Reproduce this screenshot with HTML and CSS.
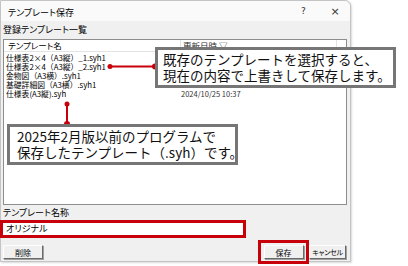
FILE: index.html
```html
<!DOCTYPE html>
<html lang="ja">
<head>
    <meta charset="UTF-8">
    <title>テンプレート保存</title>
    <link rel="stylesheet" href="styles.css">
</head>
<body>
    <div class="page">
        <div class="dialog">
            <div class="titlebar">
                <span class="title">テンプレート保存</span>
                <span class="help">?</span>
                <span class="close">×</span>
            </div>
            <div class="content">
                <div class="label">登録テンプレート一覧</div>
                <div class="list">
                    <div class="list-head">
                        <div class="col-name">テンプレート名</div>
                        <div class="col-date">更新日時 ▽</div>
                        <div class="col-rest"></div>
                    </div>
                    <ul class="rows">
                        <li><span class="name">仕様表2×4（A3縦）_1.syh1</span></li>
                        <li><span class="name">仕様表2×4（A3縦）_2.syh1</span></li>
                        <li><span class="name">金物図（A3横）.syh1</span></li>
                        <li><span class="name">基礎詳細図（A3横）.syh1</span></li>
                        <li><span class="name">仕様表(A3縦).syh</span><span class="date">2024/10/25 10:37</span></li>
                    </ul>
                </div>
                <div class="label label-name">テンプレート名称</div>
                <div class="name-field">オリジナル</div>
                <div class="actions">
                    <button class="btn btn-delete">削除</button>
                    <div class="spacer"></div>
                    <div class="mark"><button class="btn btn-save">保存</button></div>
                    <button class="btn btn-cancel">キャンセル</button>
                </div>
            </div>
        </div>

        <!-- 注釈の引き出し線 -->
        <svg class="pointers" width="408" height="266" viewBox="0 0 408 266">
            <line x1="110" y1="66.5" x2="155" y2="66.5" stroke="#c8000a" stroke-width="2"/>
            <circle cx="110" cy="66.5" r="2.5" fill="#c8000a"/>
            <circle cx="155" cy="66.5" r="3" fill="#c8000a"/>
            <line x1="67" y1="104" x2="67" y2="124" stroke="#c8000a" stroke-width="2"/>
            <circle cx="67" cy="104" r="2.5" fill="#c8000a"/>
            <circle cx="67" cy="124" r="3" fill="#c8000a"/>
        </svg>

        <div class="callout callout-top">既存のテンプレートを選択すると、<br>現在の内容で上書きして保存します。</div>
        <div class="callout callout-bottom">2025年2月版以前のプログラムで<br>保存したテンプレート（.syh）です。</div>
    </div>
</body>
</html>
```

FILE: styles.css
```css
body {
    margin: 0;
    background-color: #fff;
    font-family: 'Noto Sans CJK JP', 'Noto Sans', sans-serif;
    font-feature-settings: "palt";
    color: #000;
}
.page {
    position: relative;
    width: 408px;
    height: 266px;
    overflow: hidden;
}
.dialog {
    width: 351px;
    height: 262px;
    box-sizing: border-box;
    border: 1px solid #c4c4c4;
    border-top-right-radius: 6px;
    background-color: #f0f0f0;
    box-shadow: 1px 1px 2px rgba(0, 0, 0, 0.15);
}
.titlebar {
    display: flex;
    align-items: center;
    height: 20px;
    background-color: #fafafa;
    border-top-right-radius: 6px;
    font-size: 9px;
}
.title {
    flex: 1;
    padding-left: 7px;
    padding-top: 2px;
}
.help {
    font-family: 'DejaVu Sans', sans-serif;
    font-size: 9px;
    width: 33px;
    text-align: center;
    color: #333;
}
.close {
    font-family: 'DejaVu Sans', sans-serif;
    font-size: 11px;
    width: 30px;
    text-align: center;
    color: #333;
}
.content {
    padding: 0 3px 0 2px;
}
.label {
    height: 18px;
    line-height: 18px;
    font-size: 9px;
}
.list {
    height: 166px;
    box-sizing: border-box;
    border: 1px solid #8d8d8d;
    background-color: #fff;
}
.list-head {
    display: flex;
    height: 11px;
    border-bottom: 1px solid #e3e3e3;
    font-size: 8.5px;
    line-height: 11px;
}
.col-name {
    width: 172px;
    padding-left: 4px;
    border-right: 1px solid #e3e3e3;
}
.col-date {
    width: 153px;
    padding-left: 2px;
    border-right: 1px solid #e3e3e3;
    color: #333;
}
.col-rest {
    flex: 1;
}
.rows {
    list-style-type: none;
    margin: 0;
    padding: 1px 0 0 0;
}
.rows li {
    display: flex;
    height: 9px;
    line-height: 9px;
    font-size: 7.8px;
    font-feature-settings: normal;
}
.rows .name {
    width: 175px;
    padding-left: 2px;
}
.rows .date {
    font-size: 7.5px;
    color: #333;
}
.label-name {
    height: 12px;
    line-height: 12px;
    margin-top: 2px;
}
.name-field {
    width: 246px;
    height: 18px;
    margin: 1px 0 0 -3px;
    box-sizing: border-box;
    border: 3px solid #c8000a;
    background-color: #fff;
    padding-left: 3px;
    font-size: 9px;
    line-height: 12px;
}
.actions {
    display: flex;
    align-items: center;
    height: 24px;
    margin-top: 2px;
}
.spacer {
    flex: 1;
}
.btn {
    height: 14px;
    box-sizing: border-box;
    padding: 0;
    margin: 0;
    border: 1px solid;
    border-color: #fdfdfd #6a6a6a #6a6a6a #fdfdfd;
    background-color: #f0f0f0;
    box-shadow: 1px 1px 0 #a0a0a0;
    font-family: 'Noto Sans CJK JP', sans-serif;
    font-feature-settings: "palt";
    font-size: 8px;
    line-height: 11px;
    color: #000;
    white-space: nowrap;
}
.btn-delete {
    width: 40px;
}
.mark {
    width: 51px;
    height: 24px;
    box-sizing: border-box;
    border: 3px solid #c8000a;
    display: flex;
    align-items: center;
    justify-content: center;
}
.btn-save {
    width: 40px;
}
.btn-cancel {
    width: 37px;
    margin-right: 1px;
    font-size: 7px;
    letter-spacing: -0.2px;
}
.pointers {
    position: absolute;
    left: 0;
    top: 0;
}
.callout {
    position: absolute;
    box-sizing: border-box;
    height: 41px;
    border: 3px solid #767676;
    background-color: #fff;
    padding: 1px 0 0 5px;
    font-size: 13.5px;
    line-height: 16px;
    font-feature-settings: normal;
    white-space: nowrap;
    color: #111;
}
.callout-top {
    left: 155px;
    top: 47px;
    width: 241px;
}
.callout-bottom {
    left: 7px;
    top: 124px;
    width: 231px;
    padding-left: 7px;
}
```
